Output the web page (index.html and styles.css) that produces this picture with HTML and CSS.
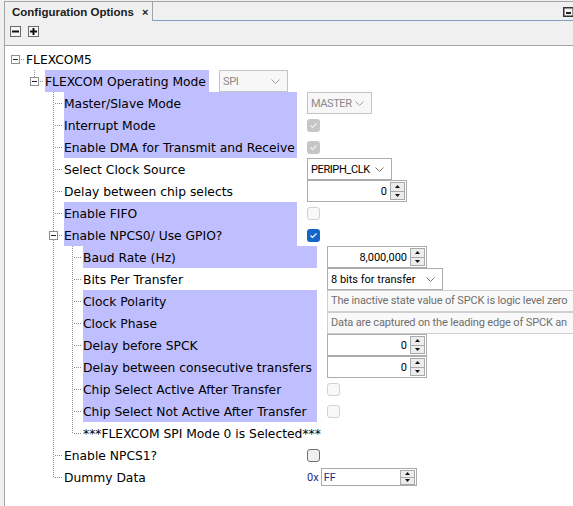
FILE: index.html
```html
<!DOCTYPE html>
<html>
<head>
<meta charset="utf-8">
<link rel="stylesheet" href="styles.css">
</head>
<body>
<div class="tabstrip">
  <div class="tab"><span class="tab-title">Configuration Options</span><span class="tab-close">×</span></div>
  <div class="strip-fill">
    <svg class="minimize" width="10" height="10" viewBox="0 0 10 10"><rect x="0.75" y="0.75" width="9.5" height="8.5" fill="#f4f4f4" stroke="#333" stroke-width="1.5"/><rect x="3" y="5" width="5" height="2" fill="#222"/></svg>
  </div>
</div>
<div class="panel">
  <div class="toolbar">
    <span class="tbtn"><svg width="11" height="11" viewBox="0 0 11 11"><rect x="0.5" y="0.5" width="10" height="10" fill="#f7f7f7" stroke="#6a6a6a"/><rect x="2" y="4.5" width="7" height="2" fill="#111"/></svg></span>
    <span class="tbtn"><svg width="11" height="11" viewBox="0 0 11 11"><rect x="0.5" y="0.5" width="10" height="10" fill="#f7f7f7" stroke="#6a6a6a"/><rect x="2" y="4.5" width="7" height="2" fill="#111"/><rect x="4.5" y="2" width="2" height="7" fill="#111"/></svg></span>
  </div>
  <div class="tree">
    <div class="row">
      <span class="g dash"><svg class="exp" width="9" height="9" viewBox="0 0 9 9"><rect x="0.5" y="0.5" width="8" height="8" fill="#fff" stroke="#8e8e8e"/><rect x="2" y="4" width="5" height="1" fill="#222"/></svg></span>
      <span class="lbl">FLEXCOM5</span>
    </div>
    <div class="row">
      <span class="g"></span>
      <span class="g ell"><svg class="exp" width="9" height="9" viewBox="0 0 9 9"><rect x="0.5" y="0.5" width="8" height="8" fill="#fff" stroke="#8e8e8e"/><rect x="2" y="4" width="5" height="1" fill="#222"/></svg></span>
      <span class="lbl l1 hl">FLEXCOM Operating Mode</span>
      <span class="combo dis w-spi"><span class="caps">SPI</span><svg width="9" height="5" viewBox="0 0 9 5"><polyline points="0.5,0.5 4.5,4.5 8.5,0.5" fill="none" stroke="#a0a0a0"/></svg></span>
    </div>
    <div class="row">
      <span class="g"></span><span class="g"></span><span class="g tee"></span>
      <span class="lbl l2 hl">Master/Slave Mode</span>
      <span class="combo dis w-master"><span class="caps">MASTER</span><svg width="9" height="5" viewBox="0 0 9 5"><polyline points="0.5,0.5 4.5,4.5 8.5,0.5" fill="none" stroke="#a0a0a0"/></svg></span>
    </div>
    <div class="row">
      <span class="g"></span><span class="g"></span><span class="g tee"></span>
      <span class="lbl l2 hl">Interrupt Mode</span>
      <span class="cb dis-on"><svg width="9" height="7" viewBox="0 0 9 7"><polyline points="1.5,3.5 3.5,5.5 7.5,1.5" fill="none" stroke="#f2f2f2" stroke-width="1.1"/></svg></span>
    </div>
    <div class="row">
      <span class="g"></span><span class="g"></span><span class="g tee"></span>
      <span class="lbl l2 hl">Enable DMA for Transmit and Receive</span>
      <span class="cb dis-on"><svg width="9" height="7" viewBox="0 0 9 7"><polyline points="1.5,3.5 3.5,5.5 7.5,1.5" fill="none" stroke="#f2f2f2" stroke-width="1.1"/></svg></span>
    </div>
    <div class="row">
      <span class="g"></span><span class="g"></span><span class="g tee"></span>
      <span class="lbl l2">Select Clock Source</span>
      <span class="combo w-clk"><span class="caps">PERIPH_CLK</span><svg width="9" height="5" viewBox="0 0 9 5"><polyline points="0.5,0.5 4.5,4.5 8.5,0.5" fill="none" stroke="#777"/></svg></span>
    </div>
    <div class="row">
      <span class="g"></span><span class="g"></span><span class="g tee"></span>
      <span class="lbl l2">Delay between chip selects</span>
      <span class="spin"><span class="spin-val">0</span><span class="spin-btns"><span class="spin-btn"><svg width="5" height="3" viewBox="0 0 5 3"><polygon points="0,3 2.5,0 5,3" fill="#111"/></svg></span><span class="spin-btn"><svg width="5" height="3" viewBox="0 0 5 3"><polygon points="0,0 5,0 2.5,3" fill="#111"/></svg></span></span></span>
    </div>
    <div class="row">
      <span class="g"></span><span class="g"></span><span class="g tee"></span>
      <span class="lbl l2 hl">Enable FIFO</span>
      <span class="cb dis-off"></span>
    </div>
    <div class="row">
      <span class="g"></span><span class="g"></span>
      <span class="g tee"><svg class="exp" width="9" height="9" viewBox="0 0 9 9"><rect x="0.5" y="0.5" width="8" height="8" fill="#fff" stroke="#8e8e8e"/><rect x="2" y="4" width="5" height="1" fill="#222"/></svg></span>
      <span class="lbl l2 hl">Enable NPCS0/ Use GPIO?</span>
      <span class="cb on"><svg width="9" height="7" viewBox="0 0 9 7"><polyline points="1.5,3.5 3.5,5.5 7.5,1.5" fill="none" stroke="#fff" stroke-width="1.1"/></svg></span>
    </div>
    <div class="row">
      <span class="g"></span><span class="g"></span><span class="g pipe"></span><span class="g tee"></span>
      <span class="lbl l3 hl">Baud Rate (Hz)</span>
      <span class="spin"><span class="spin-val">8,000,000</span><span class="spin-btns"><span class="spin-btn"><svg width="5" height="3" viewBox="0 0 5 3"><polygon points="0,3 2.5,0 5,3" fill="#111"/></svg></span><span class="spin-btn"><svg width="5" height="3" viewBox="0 0 5 3"><polygon points="0,0 5,0 2.5,3" fill="#111"/></svg></span></span></span>
    </div>
    <div class="row">
      <span class="g"></span><span class="g"></span><span class="g pipe"></span><span class="g tee"></span>
      <span class="lbl l3">Bits Per Transfer</span>
      <span class="combo w-bits"><span>8 bits for transfer</span><svg width="9" height="5" viewBox="0 0 9 5"><polyline points="0.5,0.5 4.5,4.5 8.5,0.5" fill="none" stroke="#777"/></svg></span>
    </div>
    <div class="row">
      <span class="g"></span><span class="g"></span><span class="g pipe"></span><span class="g tee"></span>
      <span class="lbl l3 hl">Clock Polarity</span>
      <span class="tf">The inactive state value of SPCK is logic level zero</span>
    </div>
    <div class="row">
      <span class="g"></span><span class="g"></span><span class="g pipe"></span><span class="g tee"></span>
      <span class="lbl l3 hl">Clock Phase</span>
      <span class="tf">Data are captured on the leading edge of SPCK an</span>
    </div>
    <div class="row">
      <span class="g"></span><span class="g"></span><span class="g pipe"></span><span class="g tee"></span>
      <span class="lbl l3 hl">Delay before SPCK</span>
      <span class="spin"><span class="spin-val">0</span><span class="spin-btns"><span class="spin-btn"><svg width="5" height="3" viewBox="0 0 5 3"><polygon points="0,3 2.5,0 5,3" fill="#111"/></svg></span><span class="spin-btn"><svg width="5" height="3" viewBox="0 0 5 3"><polygon points="0,0 5,0 2.5,3" fill="#111"/></svg></span></span></span>
    </div>
    <div class="row">
      <span class="g"></span><span class="g"></span><span class="g pipe"></span><span class="g tee"></span>
      <span class="lbl l3 hl">Delay between consecutive transfers</span>
      <span class="spin"><span class="spin-val">0</span><span class="spin-btns"><span class="spin-btn"><svg width="5" height="3" viewBox="0 0 5 3"><polygon points="0,3 2.5,0 5,3" fill="#111"/></svg></span><span class="spin-btn"><svg width="5" height="3" viewBox="0 0 5 3"><polygon points="0,0 5,0 2.5,3" fill="#111"/></svg></span></span></span>
    </div>
    <div class="row">
      <span class="g"></span><span class="g"></span><span class="g pipe"></span><span class="g tee"></span>
      <span class="lbl l3 hl">Chip Select Active After Transfer</span>
      <span class="cb dis-off"></span>
    </div>
    <div class="row">
      <span class="g"></span><span class="g"></span><span class="g pipe"></span><span class="g tee"></span>
      <span class="lbl l3 hl">Chip Select Not Active After Transfer</span>
      <span class="cb dis-off"></span>
    </div>
    <div class="row">
      <span class="g"></span><span class="g"></span><span class="g pipe"></span><span class="g ell"></span>
      <span class="lbl">***FLEXCOM SPI Mode 0 is Selected***</span>
    </div>
    <div class="row">
      <span class="g"></span><span class="g"></span><span class="g tee"></span>
      <span class="lbl l2">Enable NPCS1?</span>
      <span class="cb off"></span>
    </div>
    <div class="row">
      <span class="g"></span><span class="g"></span><span class="g ell"></span>
      <span class="lbl l2">Dummy Data</span>
      <span class="hexpre">0x</span>
      <span class="hexfield"><span class="spin-val left">FF</span><span class="spin-btns small"><span class="spin-btn"><svg width="5" height="3" viewBox="0 0 5 3"><polygon points="0,3 2.5,0 5,3" fill="#111"/></svg></span><span class="spin-btn"><svg width="5" height="3" viewBox="0 0 5 3"><polygon points="0,0 5,0 2.5,3" fill="#111"/></svg></span></span></span>
    </div>
  </div>
</div>
</body>
</html>
```
FILE: styles.css
```css
html, body {
  margin: 0;
  height: 506px;
  overflow: hidden;
}
body {
  box-sizing: border-box;
  padding-left: 4px;
  background: #f0f0f0;
  display: flex;
  flex-direction: column;
  font-family: "DejaVu Sans", sans-serif;
}
.tabstrip {
  display: flex;
  height: 21px;
  padding-top: 1px;
  box-sizing: border-box;
  flex: none;
}
.tab {
  width: 149px;
  height: 20px;
  box-sizing: border-box;
  border: 1px solid #a3a3a3;
  border-bottom: none;
  background: #f0f0f0;
  display: flex;
  align-items: center;
  padding-left: 7px;
  flex: none;
}
.tab-title {
  font: bold 11.5px "Liberation Sans", Arial, sans-serif;
  color: #1c1c1c;
}
.tab-close {
  font: bold 11px "Liberation Sans", Arial, sans-serif;
  color: #222;
  margin-left: 8px;
}
.strip-fill {
  flex: 1;
  height: 20px;
  box-sizing: border-box;
  border-top: 1px solid #a3a3a3;
  border-bottom: 1px solid #7fa0c4;
  display: flex;
  justify-content: flex-end;
  align-items: flex-start;
  padding-top: 5px;
}
.minimize { display: block; }
.panel {
  flex: 1;
  display: flex;
  flex-direction: column;
  border-left: 1px solid #a3a3a3;
  min-height: 0;
}
.toolbar {
  flex: none;
  height: 25px;
  box-sizing: border-box;
  border-bottom: 1px solid #a3a3a3;
  display: flex;
  align-items: flex-start;
  gap: 7px;
  padding: 5px 0 0 5px;
}
.tbtn svg { display: block; }
.tree {
  flex: 1;
  background: #fff;
  padding: 2px 0 0 2px;
  min-width: 0;
}
.row {
  display: flex;
  align-items: center;
  height: 22px;
  white-space: nowrap;
}
.row > * { flex: none; }
.g {
  width: 19px;
  height: 22px;
  display: flex;
  align-items: flex-start;
}
.exp {
  display: block;
  margin: 7px 0 0 4px;
}
.pipe {
  background: repeating-linear-gradient(to bottom, #8f8f8f 0 1px, transparent 1px 2px) 8px 0 / 1px 100% no-repeat;
}
.tee {
  background:
    repeating-linear-gradient(to bottom, #8f8f8f 0 1px, transparent 1px 2px) 8px 0 / 1px 100% no-repeat,
    repeating-linear-gradient(to right, #8f8f8f 0 1px, transparent 1px 2px) 10px 11px / 8px 1px no-repeat;
}
.ell {
  background:
    repeating-linear-gradient(to bottom, #8f8f8f 0 1px, transparent 1px 2px) 8px 0 / 1px 12px no-repeat,
    repeating-linear-gradient(to right, #8f8f8f 0 1px, transparent 1px 2px) 10px 11px / 8px 1px no-repeat;
}
.dash {
  background: repeating-linear-gradient(to right, #8f8f8f 0 1px, transparent 1px 2px) 10px 11px / 8px 1px no-repeat;
}
.lbl {
  height: 22px;
  box-sizing: border-box;
  padding-top: 2px;
  line-height: 20px;
  font-size: 12.3px;
  color: #000;
}
.l1 { width: 164px; }
.l2 { width: 233px; }
.l3 { width: 234px; }
.hl { background: #bfbfff; }

.combo, .spin, .tf, .hexpre, .hexfield, .cb {
  margin-left: 10px;
}
.combo, .spin, .tf, .hexpre, .hexfield {
  font: 11px Roboto, "Liberation Sans", sans-serif;
}
.caps { letter-spacing: -0.4px; }
.combo {
  height: 22px;
  box-sizing: border-box;
  border: 1px solid #acacac;
  background: #fff;
  color: #000;
  display: flex;
  align-items: center;
  justify-content: space-between;
  padding: 0 7px 0 3px;
}
.combo svg { display: block; }
.combo.dis {
  background: #f7f7f7;
  border-color: #c4c4c4;
  color: #8a8a8a;
}
.w-spi { width: 69px; }
.w-master { width: 65px; }
.w-clk { width: 85px; }
.w-bits { width: 116px; }

.cb {
  width: 13px;
  height: 13px;
  box-sizing: border-box;
  border-radius: 3px;
  display: flex;
  align-items: center;
  justify-content: center;
}
.cb svg { display: block; }
.cb.dis-on { background: #c6c6c6; }
.cb.dis-off { background: #f8f8f8; border: 1px solid #d2d2d2; }
.cb.on { background: #1466c6; }
.cb.off { background: #efefef; border: 1px solid #707070; }

.spin {
  width: 100px;
  height: 22px;
  box-sizing: border-box;
  border: 1px solid #acacac;
  background: #fff;
  display: flex;
  align-items: center;
  color: #000;
}
.spin-val {
  flex: 1;
  text-align: right;
  padding-right: 3px;
}
.spin-val.left {
  text-align: left;
  padding-left: 2px;
}
.spin-btns {
  width: 15px;
  height: 18px;
  margin-right: 1px;
  display: flex;
  flex-direction: column;
  flex: none;
}
.spin-btns.small { height: 15px; }
.spin-btn {
  flex: 1;
  box-sizing: border-box;
  border: 1px solid #a9a9a9;
  background: #ececec;
  display: flex;
  align-items: center;
  justify-content: center;
}
.spin-btn + .spin-btn { border-top: none; }
.spin-btn svg { display: block; }

.tf {
  width: 290px;
  height: 22px;
  box-sizing: border-box;
  border: 1px solid #cfcfcf;
  background: #f9f9f9;
  color: #6f6f6f;
  padding-left: 3px;
  line-height: 20px;
  letter-spacing: -0.15px;
  overflow: hidden;
}
.hexpre { color: #1b2a86; }
.hexfield {
  margin-left: 2px;
  width: 96px;
  height: 18px;
  box-sizing: border-box;
  border: 1px solid #a9a9a9;
  background: #fff;
  color: #1b2a86;
  display: flex;
  align-items: center;
}
```
